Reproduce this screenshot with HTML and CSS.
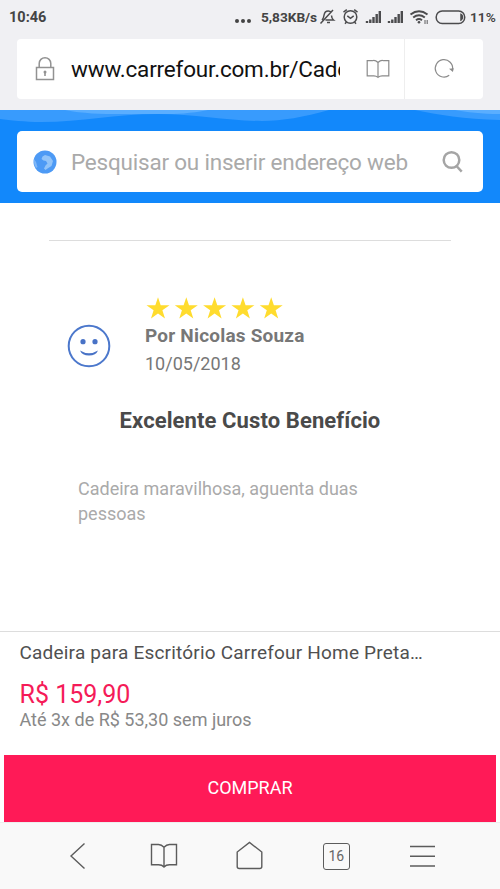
FILE: index.html
```
<!DOCTYPE html>
<html lang="pt-BR">
<head>
<meta charset="utf-8">
<meta name="viewport" content="width=device-width, initial-scale=1">
<title>Carrefour</title>
<link rel="stylesheet" href="styles.css">
</head>
<body>
<div class="phone">
  <header class="browser">
    <div class="status">
      <span class="clock">10:46</span>
      <svg class="dots" width="18" height="6" viewBox="0 0 18 6" fill="#444"><circle cx="3" cy="3" r="2"/><circle cx="9" cy="3" r="2"/><circle cx="15" cy="3" r="2"/></svg>
      <span class="speed">5,83KB/s</span>
      <svg class="system" width="150" height="20" viewBox="0 0 150 20" fill="none" stroke="#4b4b4d" stroke-width="1.5">
        <path d="M3 13c1.500-1.500 1.800-3 2.200-5.500.4-2.500 2-3.600 4-3.600 1.300 0 2.300.5 3 1.400M12.500 8.500c.1 2.500.7 3.500 2 4.500H6.500M8 15.500h3M1.500 16.500 14 3"/>
        <circle cx="31.500" cy="10" r="6.300"/><path d="m28.300 8.800 3.200 2.500 3.200-2.500M24.500 5.200l3.300-2.600M38.500 5.200l-3.300-2.600M27.500 15l-1.500 1.700M35.500 15l1.500 1.700"/>
        <g stroke-width="2.400"><path d="M48 16v-2M51.300 16v-3.500M54.500 16v-6M57.700 16V7M60.800 16V4"/><path d="M70 16v-2M73.300 16v-3.500M76.500 16v-6M79.700 16V7M82.800 16V4"/></g>
        <g stroke-width="2"><path d="M91.500 7.500q8.500-6.500 17 0M94.200 10.500q5.800-4.500 11.600 0M97 13.200q3-2.200 6 0"/></g>
        <circle cx="100" cy="15.300" r="1.300" fill="#4b4b4d" stroke="none"/><path d="M106 17v-4M108.200 13v4" stroke-width=".9"/>
        <rect x="117.200" y="4" width="28.500" height="12.500" rx="6" stroke-width="1.500"/>
        <path d="M142 7.500v5.500q1.500-.8 1.500-2.750T142 7.500Z" fill="#4b4b4d"/>
      </svg>
      <span class="percent">11%</span>
    </div>
    <div class="address">
      <svg class="lock" width="20" height="26" viewBox="0 0 20 26" fill="none" stroke="#929292" stroke-width="1.500"><rect x="1.500" y="11.500" width="17" height="12"/><path d="M4.200 11.500V7.500a5.800 5.800 0 0 1 11.600 0v4"/><circle cx="10" cy="16" r="1.500" fill="#929292" stroke="none"/><path d="M10 16v4" stroke-width="1.600"/></svg>
      <span class="url">www.carrefour.com.br/Cade</span>
      <svg class="reader" width="24" height="20" viewBox="0 0 24 20" fill="none" stroke="#8b8b8b" stroke-width="1.200"><path d="M12 3.500Q9 .8 6.500 1.700H1.200v15.200h5.500q3-.5 5.300 1.500 2.300-2 5.300-1.500h5.500V1.700h-5.300Q15 .8 12 3.500Zm0 0v14.900"/></svg>
      <div class="reload"><svg width="22" height="22" viewBox="0 0 22 22" fill="none" stroke="#8b8b8b" stroke-width="1.200"><path d="M16.200 17.300A8.700 8.700 0 1 1 19.600 11.500"/><path d="m16 10.800 4.800-.5-.9 3.800Z" fill="#8b8b8b" stroke="none"/></svg></div>
    </div>
  </header>

  <div class="banner">
    <svg class="waves" width="500" height="14" viewBox="0 0 500 14"><path d="M0 0H329C304 7 282 11 262 11 230 11 195 4 158 4 115 4 82 12 41 12 25 12 10 10 0 9ZM415 0H500V10C464 9 438 5 415 0Z" fill="#389bfd"/><path d="M65 0H208C183 5 166 4 148 4 114 4 90 5 65 0ZM455 0H500V4C482 4 466 2 455 0Z" fill="#5aaeff"/></svg>
    <div class="search">
      <svg class="globe" width="24" height="24" viewBox="0 0 24 24"><circle cx="12" cy="12" r="11.500" fill="#4d9af5"/><path d="M9.500 6.500 12 5l5 1.500 3 4.500-1.500 5-4 2.500-2 1.500-1.500-1.500 1.500-3 2-2-1.500-2.500-2.500-.5-2-1.500Z" fill="#92c4f9"/><path d="M1 9l2 3 1.500 5-1.500 1Q.5 14 1 9Z" fill="#80b8f8"/></svg>
      <span class="placeholder">Pesquisar ou inserir endereço web</span>
      <svg class="magnifier" width="22" height="24" viewBox="0 0 22 24" fill="none" stroke="#a5a5a5" stroke-width="2.500"><circle cx="9.500" cy="10" r="7.800"/><path d="m14.500 16 5.200 5.700"/></svg>
    </div>
  </div>

  <main class="review">
    <div class="author">
      <svg class="face" width="44" height="44" viewBox="0 0 44 44"><circle cx="22" cy="22" r="20.300" fill="none" stroke="#4c78cc" stroke-width="2"/><circle cx="16" cy="17.700" r="2.600" fill="#4872c6"/><circle cx="28" cy="17.700" r="2.600" fill="#4872c6"/><path d="M13 26.500Q22 32 31 26.500 29 31.500 22 31.500T13 26.500Z" fill="#4872c6"/></svg>
      <div class="details">
        <svg class="stars" width="138" height="24" viewBox="0 0 138 24" fill="#ffdc2e"><defs><path id="star" d="M12 .3 14.700 8.300H23.500L16.400 13.300 19 21.500 12 16.500 5 21.500 7.600 13.300.5 8.300H9.300Z"/></defs><use href="#star"/><use href="#star" x="28.300"/><use href="#star" x="56.600"/><use href="#star" x="84.900"/><use href="#star" x="113.200"/></svg>
        <strong class="name">Por Nicolas Souza</strong>
        <span class="date">10/05/2018</span>
      </div>
    </div>
    <h1 class="title">Excelente Custo Benefício</h1>
    <p class="comment">Cadeira maravilhosa, aguenta duas pessoas</p>
  </main>

  <section class="product">
    <div class="product-name">Cadeira para Escritório Carrefour Home Preta…</div>
    <div class="price">R$ 159,90</div>
    <div class="installments">Até 3x de R$ 53,30 sem juros</div>
    <button class="buy">COMPRAR</button>
  </section>

  <nav class="toolbar">
    <svg width="28" height="30" viewBox="0 0 28 30"><path d="M20.500 2.500 7 15l13.500 12.500"/></svg>
    <svg width="28" height="30" viewBox="0 0 28 30"><path d="M14 6.300Q11.500 3.500 8.500 3.500H1.500v20.300h7q3.500 0 5.500 2.200 2-2.200 5.500-2.200h7V3.500h-7Q16.500 3.500 14 6.300Zm0 0V26"/></svg>
    <svg width="28" height="30" viewBox="0 0 28 30"><path d="M.2 11v14.500q0 2 2 2h20.600q2 0 2-2V11L12.500 1.500Z"/></svg>
    <div class="tabs">16</div>
    <svg width="28" height="30" viewBox="0 0 28 30"><path d="M2 5.500h25M2 15.300h25M2 25h25"/></svg>
  </nav>
</div>
</body>
</html>
```

FILE: styles.css
```
* { box-sizing: border-box; }
body { margin: 0; font-family: Roboto, "Liberation Sans", sans-serif; background: #fff; }
svg { display: block; flex: none; }
.phone { width: 500px; height: 889px; overflow: hidden; display: flex; flex-direction: column; }

.browser { height: 110px; background: #f0f0f3; flex: none; }
.status { height: 39px; padding: 0 4px 5px 9px; display: flex; align-items: center; color: #444; font-weight: 700; white-space: nowrap; }
.clock { width: 225px; font-size: 14.500px; }
.dots { margin-top: 8px; }
.speed { width: 58px; margin-left: 9px; font-size: 13.700px; letter-spacing: -0.050px; }
.system { margin-right: 1px; }
.percent { font-size: 13.700px; font-weight: 600; }
.address { height: 60px; margin: 0 17px; display: flex; align-items: center; background: #fff; border-radius: 4px; }
.lock { margin-left: 18px; }
.url { width: 269px; margin-left: 16px; overflow: hidden; white-space: nowrap; font-size: 22.500px; line-height: 30px; letter-spacing: -0.190px; color: #111; }
.reader { margin-left: 26px; }
.reload { width: 79px; height: 100%; margin-left: auto; border-left: 1px solid #eee; display: flex; align-items: center; justify-content: center; }

.banner { height: 93px; background: #1288fb; flex: none; }
.waves { margin-bottom: 7px; }
.search { height: 61px; margin: 0 17px; padding: 0 19px 0 16px; background: #fff; border-radius: 5px; display: flex; align-items: center; }
.placeholder { margin-left: 14px; font-size: 22.500px; line-height: 30px; letter-spacing: -0.210px; color: #aaa; white-space: nowrap; }
.magnifier { margin-left: auto; }

.review { height: 428px; padding-top: 37px; flex: none; }
.author { margin: 0 49px; padding: 56px 0 0 18px; border-top: 1px solid #ddd; display: flex; }
.face { margin-top: 27px; }
.details { margin-left: 34px; display: flex; flex-direction: column; }
.name { font-size: 19px; line-height: 28px; letter-spacing: 0.200px; color: #777; }
.date { font-size: 18px; line-height: 28px; color: #777; }
.stars { margin: 0 0 1px 1px; }
.title { margin: 27px 0 0; text-align: center; font-size: 22px; line-height: 32px; letter-spacing: 0.100px; font-weight: 700; color: #4a4a4a; }
.comment { width: 310px; margin: 39px 0 0 78px; font-size: 18px; line-height: 25px; color: #aaa; }

.product { height: 191px; padding: 8px 4px 0; border-top: 1px solid #ddd; flex: none; display: flex; flex-direction: column; }
.product-name, .price, .installments { margin-left: 15.500px; white-space: nowrap; }
.product-name { font-size: 19px; line-height: 26px; letter-spacing: 0.200px; color: #505050; }
.price { margin-top: 14px; font-size: 25px; line-height: 30px; color: #f51b58; }
.installments { font-size: 18px; line-height: 20px; color: #888; }
.buy { height: 67px; margin-top: auto; padding: 0 0 2px; border: 0; background: #ff1a57; color: #fff; font: 18px Roboto, sans-serif; }

.toolbar { height: 67px; padding: 0 64px; background: #f9f9f9; border-top: 1px solid #eee; display: flex; justify-content: space-between; align-items: center; }
.toolbar svg { fill: none; stroke: #5c5c5c; stroke-width: 1.400; overflow: visible; }
.tabs { width: 27px; height: 27px; border: 1.500px solid #5c5c5c; border-radius: 3px; font-size: 14px; line-height: 24px; text-align: center; color: #666; }
```
